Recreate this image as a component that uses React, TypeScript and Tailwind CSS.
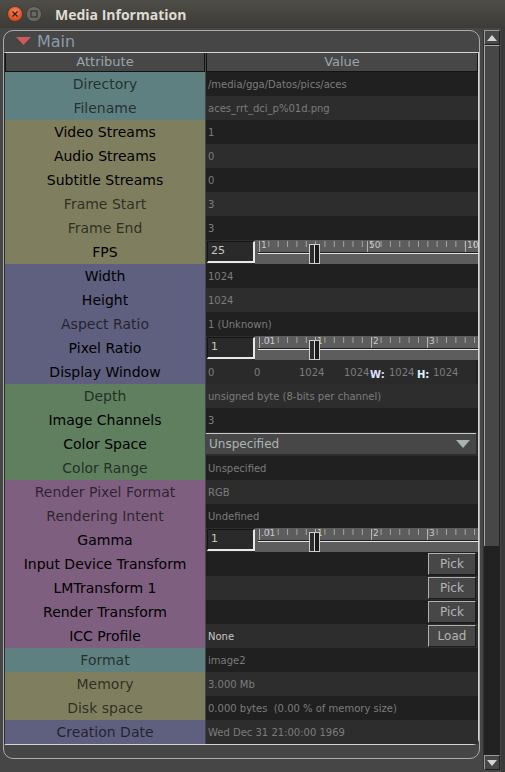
import type { ReactNode } from 'react'

const TEAL = 'bg-[#5f8080]'
const OLIVE = 'bg-[#7f7f5f]'
const BLUE = 'bg-[#5f5f7f]'
const GREEN = 'bg-[#5f7f5f]'
const PURPLE = 'bg-[#7f5f7f]'

type Kind = 'text' | 'slider' | 'window' | 'combo' | 'pick' | 'load'

interface Attr {
  label: string
  bg: string
  bright?: boolean
  kind?: Kind
  value?: string
  ticks?: [string, number][]
}

const ratioTicks: [string, number][] = [
  ['.01', 4.5],
  ['1', 60.5],
  ['2', 116.5],
  ['3', 172.5],
]

const rows: Attr[] = [
  { label: 'Directory', bg: TEAL, value: '/media/gga/Datos/pics/aces' },
  { label: 'Filename', bg: TEAL, value: 'aces_rrt_dci_p%01d.png' },
  { label: 'Video Streams', bg: OLIVE, bright: true, value: '1' },
  { label: 'Audio Streams', bg: OLIVE, bright: true, value: '0' },
  { label: 'Subtitle Streams', bg: OLIVE, bright: true, value: '0' },
  { label: 'Frame Start', bg: OLIVE, value: '3' },
  { label: 'Frame End', bg: OLIVE, value: '3' },
  {
    label: 'FPS',
    bg: OLIVE,
    bright: true,
    kind: 'slider',
    value: '25',
    ticks: [
      ['1', 4.5],
      ['50', 112.5],
      ['100', 210.5],
    ],
  },
  { label: 'Width', bg: BLUE, bright: true, value: '1024' },
  { label: 'Height', bg: BLUE, bright: true, value: '1024' },
  { label: 'Aspect Ratio', bg: BLUE, value: '1 (Unknown)' },
  { label: 'Pixel Ratio', bg: BLUE, bright: true, kind: 'slider', value: '1', ticks: ratioTicks },
  { label: 'Display Window', bg: BLUE, bright: true, kind: 'window' },
  { label: 'Depth', bg: GREEN, value: 'unsigned byte (8-bits per channel)' },
  { label: 'Image Channels', bg: GREEN, bright: true, value: '3' },
  { label: 'Color Space', bg: GREEN, bright: true, kind: 'combo', value: 'Unspecified' },
  { label: 'Color Range', bg: GREEN, value: 'Unspecified' },
  { label: 'Render Pixel Format', bg: PURPLE, value: 'RGB' },
  { label: 'Rendering Intent', bg: PURPLE, value: 'Undefined' },
  { label: 'Gamma', bg: PURPLE, bright: true, kind: 'slider', value: '1', ticks: ratioTicks },
  { label: 'Input Device Transform', bg: PURPLE, bright: true, kind: 'pick' },
  { label: 'LMTransform 1', bg: PURPLE, bright: true, kind: 'pick' },
  { label: 'Render Transform', bg: PURPLE, bright: true, kind: 'pick' },
  { label: 'ICC Profile', bg: PURPLE, bright: true, kind: 'load', value: 'None' },
  { label: 'Format', bg: TEAL, value: 'image2' },
  { label: 'Memory', bg: OLIVE, value: '3.000 Mb' },
  { label: 'Disk space', bg: OLIVE, value: '0.000 bytes  (0.00 % of memory size)' },
  { label: 'Creation Date', bg: BLUE, value: 'Wed Dec 31 21:00:00 1969' },
]

function Slider({ value, ticks }: { value: string; ticks: [string, number][] }) {
  const minor = Array.from({ length: 24 }, (_, i) => 4.5 + i * 9.35)
  return (
    <div className="flex h-full items-center">
      <div className="ml-px flex h-[22px] w-[48px] items-center border-t border-l border-t-[#151515] border-l-[#151515] border-r-2 border-b-2 border-r-[#e8e8e8] border-b-[#e8e8e8] bg-[#2a2a2a] pl-[3px] text-[11px] text-[#c4c4c4]">
        {value}
      </div>
      <div className="relative h-[24px] flex-1 overflow-hidden bg-[#5d5d5d]">
        <svg width="230" height="24" className="absolute left-0 top-0">
          {minor.map((x, i) => (
            <line key={i} x1={x} x2={x} y1={1} y2={7} stroke="#a4a4a4" strokeWidth="1" />
          ))}
          {ticks.map(([t, x]) => (
            <g key={t}>
              <line x1={x} x2={x} y1={1} y2={12} stroke="#b4b4b4" strokeWidth="1" />
              <text x={x + 1.5} y={8} fontSize="9" fill="#c8c8c8" fontFamily="DejaVu Sans, sans-serif">
                {t}
              </text>
            </g>
          ))}
          <rect x={3} y={12} width={230} height={1} fill="#1e1e1e" />
          <rect x={3} y={13} width={230} height={1} fill="#e4e4e4" />
          <rect x={54.5} y={4.5} width={10} height={19} fill="#2c2c2c" stroke="#cfcfcf" strokeWidth="1" />
          <line x1={59.5} x2={59.5} y1={5} y2={23} stroke="#d8d8d8" strokeWidth="1" />
          <rect x={60} y={5} width={4} height={18} fill="#1a1a1a" />
        </svg>
      </div>
    </div>
  )
}

function DisplayWindow() {
  return (
    <div className="flex h-full w-[270px] items-center bg-[#2a2a2a] text-[10px] text-[#7c7c7c]">
      <span className="w-[48px] pl-[2px]">0</span>
      <span className="w-[45px]">0</span>
      <span className="w-[45px]">1024</span>
      <span className="w-[26px]">1024</span>
      <span className="w-[19px] pt-[4px] text-[10px] font-bold text-[#dce0ff]">W:</span>
      <span className="w-[28px]">1024</span>
      <span className="w-[16px] pt-[4px] text-[10px] font-bold text-[#dcf4ff]">H:</span>
      <span>1024</span>
    </div>
  )
}

function Combo({ value }: { value: string }) {
  return (
    <div className="flex h-full items-start">
      <div className="mt-[1px] flex h-[21px] w-[270px] items-center justify-between border-t border-t-[#c8c8c8] bg-[#474747] pl-[3px] pr-[6px] text-[12px] text-[#aeb4b4]">
        <span>{value}</span>
        <svg width="14" height="8">
          <polygon points="0,0 14,0 7,8" fill="#a8b4b4" />
        </svg>
      </div>
    </div>
  )
}

function Button({ children }: { children: ReactNode }) {
  return (
    <div className="mr-[2px] flex h-[22px] w-[48px] items-center justify-center border-t border-l border-t-[#b0b0b0] border-l-[#b0b0b0] border-r border-b border-r-[#1c1c1c] border-b-[#1c1c1c] bg-[#474747] text-[12px] text-[#b4b4b4]">
      {children}
    </div>
  )
}

function Value({ row }: { row: Attr }) {
  switch (row.kind) {
    case 'slider':
      return <Slider value={row.value ?? ''} ticks={row.ticks ?? []} />
    case 'window':
      return <DisplayWindow />
    case 'combo':
      return <Combo value={row.value ?? ''} />
    case 'pick':
      return (
        <div className="flex h-full items-center justify-end">
          <Button>Pick</Button>
        </div>
      )
    case 'load':
      return (
        <div className="flex h-full items-center justify-between pl-[2px]">
          <span className="text-[10px] text-[#c8c8c8]">{row.value}</span>
          <Button>Load</Button>
        </div>
      )
    default:
      return (
        <div className="flex h-full items-center whitespace-pre pl-[2px] text-[10px] text-[#7c7c7c]">{row.value}</div>
      )
  }
}

function TitleBar() {
  return (
    <div className="flex h-[28px] items-center bg-gradient-to-b from-[#4f4d47] to-[#3c3b37] pl-[7px]">
      <svg width="16" height="16" viewBox="0 0 16 16">
        <defs>
          <radialGradient id="cl" cx="50%" cy="35%" r="60%">
            <stop offset="0%" stopColor="#f78a5e" />
            <stop offset="100%" stopColor="#d4471c" />
          </radialGradient>
        </defs>
        <circle cx="8" cy="8" r="7.5" fill="url(#cl)" stroke="#3a2a22" strokeWidth="0.6" />
        <path d="M5.5 5.5 L10.5 10.5 M10.5 5.5 L5.5 10.5" stroke="#3a2018" strokeWidth="1.4" />
      </svg>
      <svg width="16" height="16" viewBox="0 0 16 16" className="ml-[3px]">
        <circle cx="8" cy="8" r="7.5" fill="#6a6963" stroke="#34332f" strokeWidth="0.6" />
        <rect x="5" y="5" width="6" height="6" fill="none" stroke="#35342f" strokeWidth="1.2" />
      </svg>
      <span className="ml-[13px] font-['Open_Sans',sans-serif] text-[14px] font-bold text-[#dfdbd2]">
        Media Information
      </span>
    </div>
  )
}

function ScrollButton({ up }: { up: boolean }) {
  return (
    <div className="flex h-[15px] w-[16px] items-center justify-center border-t border-l border-t-[#9a9a9a] border-l-[#9a9a9a] border-r border-b border-r-[#1e1e1e] border-b-[#1e1e1e] bg-[#474747]">
      <svg width="10" height="6">
        <polygon points={up ? '0,6 10,6 5,0' : '0,0 10,0 5,6'} fill="#d4d4d4" />
      </svg>
    </div>
  )
}

function ScrollBar() {
  return (
    <div className="ml-[3px] mt-[2px] flex h-[740px] w-[17px] flex-col border-l border-l-[#333]">
      <ScrollButton up />
      <div className="flex flex-1 flex-col">
        <div className="h-[501px] border-l border-t border-l-[#a8a8a8] border-t-[#a8a8a8] border-r border-r-[#222] bg-[#474747]" />
        <div className="flex-1 bg-[#222]" />
      </div>
      <ScrollButton up={false} />
    </div>
  )
}

export default function App() {
  return (
    <div className="flex h-[772px] w-[505px] flex-col overflow-hidden bg-[#464646] font-['DejaVu_Sans',sans-serif]">
      <TitleBar />
      <div className="flex">
        <div className="ml-[3px] mt-[2px] h-[729px] w-[477px] rounded-[10px] border border-[#ababab]">
          <div className="flex h-[21px] items-center pl-[12px]">
            <svg width="15" height="9">
              <polygon points="0,0 15,0 7.5,8" fill="#cf5a5a" />
            </svg>
            <span className="ml-[6px] text-[16px] text-[#8b9cac]">Main</span>
          </div>
          <div className="w-[475px] rounded-br-[6px] border-y border-r border-l border-y-[#d4d4d4] border-r-[#d4d4d4] border-l-[#2a2a2a]">
            <div className="flex h-[19px] text-[13px] text-[#9aa4ae]">
              <div className="flex w-[200px] items-center justify-center border border-t-0 border-[#141414] bg-[#474747]">
                Attribute
              </div>
              <div className="ml-px flex flex-1 items-center justify-center border border-t-0 border-[#141414] bg-[#474747]">
                Value
              </div>
            </div>
            {rows.map((row, i) => (
              <div key={row.label} className="flex h-[24px]">
                <div
                  className={`flex w-[200px] items-center justify-center text-[14px] ${row.bg} ${
                    row.bright ? 'text-black' : 'text-black/65'
                  }`}
                >
                  {row.label}
                </div>
                <div className={`ml-px flex-1 overflow-hidden ${i % 2 ? 'bg-[#2d2d2d]' : 'bg-[#202020]'}`}>
                  <Value row={row} />
                </div>
              </div>
            ))}
          </div>
        </div>
        <ScrollBar />
        <div className="ml-auto h-[744px] w-[4px] bg-[#3a3a3a]" />
      </div>
    </div>
  )
}
